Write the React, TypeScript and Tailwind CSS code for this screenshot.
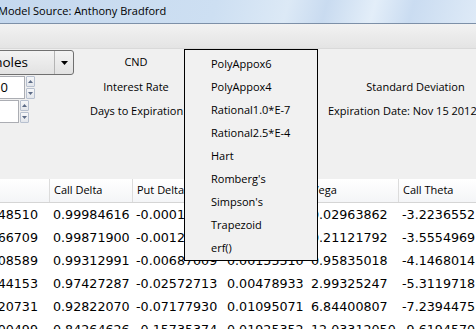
import React from 'react';

const ui = "font-['Open_Sans',sans-serif]";
const mono = "font-['DejaVu_Sans',sans-serif]";

const methods = [
  'PolyAppox6',
  'PolyAppox4',
  'Rational1.0*E-7',
  'Rational2.5*E-4',
  'Hart',
  "Romberg's",
  "Simpson's",
  'Trapezoid',
  'erf()',
];

const cols = [
  { head: '', w: 'w-[50px]', right: true },
  { head: 'Call Delta', w: 'w-[83px]' },
  { head: 'Put Delta', w: 'w-[91px]' },
  { head: 'Gamma', w: 'w-[84px]' },
  { head: 'Vega', w: 'w-[91px]' },
  { head: 'Call Theta', w: 'w-[120px]' },
];

const rows = [
  ['0.00048510', '0.99984616', '-0.00015384', '0.00009142', '0.02963862', '-3.2236552'],
  ['0.00366709', '0.99871900', '-0.00128100', '0.00062587', '0.21121792', '-3.5554969'],
  ['0.02508589', '0.99312991', '-0.00687009', '0.00155510', '0.95835018', '-4.1468014'],
  ['0.12044153', '0.97427287', '-0.02572713', '0.00478933', '2.99325247', '-5.3119718'],
  ['0.40320731', '0.92822070', '-0.07177930', '0.01095071', '6.84400807', '-7.2394475'],
  ['1.10000499', '0.84264626', '-0.15735374', '0.01925352', '12.03312050', '-9.6194570'],
];

const Tri: React.FC<{ up?: boolean; color?: string; w?: number; h?: number }> = ({ up, color = '#000', w = 7, h = 4 }) => (
  <svg width={w} height={h} viewBox={`0 0 ${w} ${h}`}>
    <polygon points={up ? `0,${h} ${w},${h} ${w / 2},0` : `0,0 ${w},0 ${w / 2},${h}`} fill={color} />
  </svg>
);

const SpinButtons: React.FC = () => (
  <div className="ml-[1px] flex w-[9px] flex-col gap-[1px]">
    <div className="flex h-[11px] items-center justify-center rounded-[1px] border border-[#b7c0cf] bg-[linear-gradient(#f6f7f9,#e3e6eb)]">
      <Tri up w={5} h={3} color="#5c6b86" />
    </div>
    <div className="flex h-[11px] items-center justify-center rounded-[1px] border border-[#b7c0cf] bg-[linear-gradient(#f6f7f9,#e3e6eb)]">
      <Tri w={5} h={3} color="#5c6b86" />
    </div>
  </div>
);

export default function App() {
  return (
    <div className={`relative h-[329px] w-[476px] overflow-hidden bg-[#f0f0f0] text-black ${ui}`}>
      {/* window title */}
      <div className="h-[24px] border-b border-[#7d90a8] bg-[linear-gradient(105deg,#c5d8ee_0%,#cddff2_45%,#dce9f6_60%,#c9dbf0_68%,#e3eef9_78%,#cadcf1_86%,#deeaf7_100%)] pt-[3px]">
        <div className="-ml-[2px] whitespace-nowrap text-[11px] leading-[15px]">Model Source: Anthony Bradford</div>
      </div>
      <div className="h-[25px] border-b border-[#d9d9d9] bg-[linear-gradient(#f2f2f2,#e4e4e4)]" />

      {/* inputs */}
      <div className="h-[129px] text-[11px]">
        <div className="mt-[1px] flex h-[25px] items-center">
          <div className="w-[90px] shrink-0">
            <div className="-ml-[60px] flex h-[25px] w-[134px] rounded-[3px] border border-[#707070] bg-[linear-gradient(#f3f3f3,#e2e2e2)]">
              <div className="flex flex-1 items-center justify-end overflow-hidden pr-[26px] text-[13.5px]">
                <span className="whitespace-nowrap">Black-Scholes</span>
              </div>
              <div className="flex w-[19px] items-center justify-center border-l border-[#b4b4b4]">
                <Tri w={7} h={4} />
              </div>
            </div>
          </div>
          <div className="w-[92px] shrink-0 text-center">CND</div>
        </div>

        <div className="mt-[1px] flex h-[23px] items-center">
          <div className="flex w-[90px] shrink-0">
            <div className="-ml-[40px] flex h-[23px] w-[65px] items-center justify-end border border-[#abadb3] bg-white pr-[16px] text-[13px]">
              <span>10</span>
            </div>
            <SpinButtons />
          </div>
          <div className="w-[92px] shrink-0 text-center">Interest Rate</div>
          <div className="w-[146px] shrink-0" />
          <div className="w-[175px] shrink-0 text-center">Standard Deviation</div>
        </div>

        <div className="mt-[1px] flex h-[23px] items-center">
          <div className="flex w-[90px] shrink-0">
            <div className="-ml-[40px] h-[23px] w-[59px] border border-[#abadb3] bg-white" />
            <SpinButtons />
          </div>
          <div className="w-[92px] shrink-0 whitespace-nowrap text-center">Days to Expiration</div>
          <div className="w-[146px] shrink-0" />
          <div className="w-[175px] shrink-0 whitespace-nowrap">Expiration Date: Nov 15 2012</div>
        </div>
      </div>

      {/* results table */}
      <div className="bg-white">
        <div className="flex h-[24px] border-b border-[#d5d5d5] bg-[linear-gradient(#ffffff,#f4f5f7)] text-[11px]">
          {cols.map((c, i) => (
            <div key={i} className={`${c.w} flex shrink-0 items-center whitespace-nowrap border-r border-[#dcdcdc] pl-[4px]`}>
              {c.head}
            </div>
          ))}
        </div>
        {rows.map((r, ri) => (
          <div key={ri} className={`flex h-[23px] text-[12.7px] ${mono}`}>
            {r.map((v, ci) => (
              <div
                key={ci}
                className={`${cols[ci].w} flex shrink-0 items-center overflow-hidden whitespace-nowrap ${
                  cols[ci].right ? 'justify-end pr-[12px]' : 'pl-[3px]'
                }`}
              >
                {v}
              </div>
            ))}
          </div>
        ))}
      </div>

      {/* CND method popup */}
      <div className="absolute left-[184px] top-[49px] h-[212px] w-[134px] border border-black bg-[#f1f1f1] pt-[2px] text-[11px]">
        {methods.map((m) => (
          <div key={m} className="h-[23px] whitespace-nowrap pl-[26px] leading-[23px]">
            {m}
          </div>
        ))}
      </div>
    </div>
  );
}
